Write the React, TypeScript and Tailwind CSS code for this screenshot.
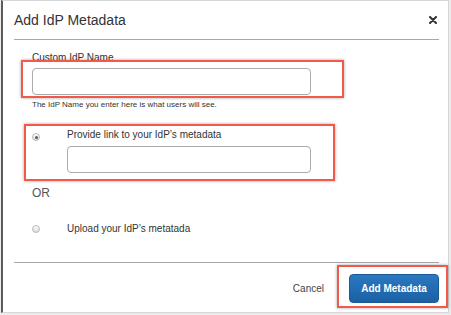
const Radio = ({ checked }: { checked?: boolean }) => (
  <span className="flex h-[8px] w-[8px] items-center justify-center rounded-full border border-[#b9b9b9] bg-gradient-to-b from-[#fdfdfd] to-[#dcdcdc]">
    {checked && <span className="h-[3px] w-[3px] rounded-full bg-[#5a5a5a]" />}
  </span>
);

const Highlight = ({ className }: { className: string }) => (
  <div
    className={`pointer-events-none absolute border-2 border-[#f15a4b] shadow-[0_0_3px_rgba(0,0,0,0.35)] ${className}`}
  />
);

export default function App() {
  return (
    <div className="h-[315px] w-[451px] bg-[#ececec] font-['Liberation_Sans',Arial,sans-serif] text-[#333]">
      <div className="relative ml-px flex h-[313px] w-[448px] flex-col border-t border-r border-b border-[#d6d6d6] border-l-2 border-l-[#5c5c5c] bg-white">
        {/* header */}
        <div className="ml-[11px] mr-[9px] flex items-center justify-between border-b border-[#a8a8a8] pt-[11px] pb-[11px]">
          <div className="text-[14px] leading-[16px]">Add IdP Metadata</div>
          <svg width="8" height="8" viewBox="0 0 8 8" className="mr-[2px]">
            <path d="M1 1L7 7M7 1L1 7" stroke="#333" strokeWidth="2" strokeLinecap="round" />
          </svg>
        </div>

        {/* body */}
        <div className="flex flex-col pl-[29px]">
          <div className="mt-[12px] text-[10px] leading-[12px]">Custom IdP Name</div>
          <div className="mt-[4px] h-[27px] w-[279px] rounded-[4px] border border-[#ababab] bg-white" />
          <div className="mt-[5px] text-[8px] leading-[10px]">
            The IdP Name you enter here is what users will see.
          </div>

          <div className="mt-[19px] flex">
            <div className="w-[35px] pt-[4px]">
              <Radio checked />
            </div>
            <div className="text-[10px] leading-[12px]">Provide link to your IdP’s metadata</div>
          </div>
          <div className="mt-[5px] ml-[35px] h-[27px] w-[244px] rounded-[4px] border border-[#ababab] bg-white" />

          <div className="mt-[13px] text-[12px] leading-[14px] text-[#555]">OR</div>

          <div className="mt-[23px] flex">
            <div className="w-[35px] pt-[2px]">
              <Radio />
            </div>
            <div className="text-[10px] leading-[12px]">Upload your IdP’s metatada</div>
          </div>
        </div>

        {/* footer */}
        <div className="mt-[27px] ml-[11px] mr-[9px] flex items-center justify-end gap-[25px] border-t border-[#a8a8a8] pt-[11px]">
          <span className="text-[10px] leading-[12px] text-[#444]">Cancel</span>
          <button className="h-[29px] w-[90px] rounded-[4px] border border-[#1a5a96] bg-gradient-to-b from-[#2a79c2] to-[#1b60a3] text-[10px] font-bold text-white">
            Add Metadata
          </button>
        </div>

        <Highlight className="left-[18px] top-[59px] h-[38px] w-[323px]" />
        <Highlight className="left-[21px] top-[123px] h-[57px] w-[311px]" />
        <Highlight className="left-[334px] top-[264px] h-[43px] w-[111px]" />
      </div>
    </div>
  );
}
